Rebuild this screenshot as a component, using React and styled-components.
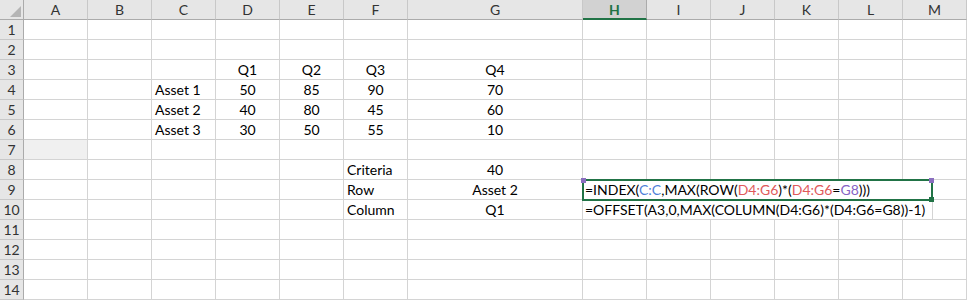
import React from 'react'
import styled, { createGlobalStyle } from 'styled-components'

const GlobalStyle = createGlobalStyle`
  html, body {
    margin: 0;
    padding: 0;
    background: #ffffff;
  }
  body {
    font-family: Lato, "Liberation Sans", sans-serif;
  }
`;

const COLS = ['A', 'B', 'C', 'D', 'E', 'F', 'G', 'H', 'I', 'J', 'K', 'L', 'M'];
const WIDTHS = { G: 175 };
const ROW_COUNT = 14;
const ACTIVE_COL = 'H';

// plain strings are centred, { text, left } sit on the left edge
const CELLS = {
  3: { D: 'Q1', E: 'Q2', F: 'Q3', G: 'Q4' },
  4: { C: { text: 'Asset 1', left: true }, D: '50', E: '85', F: '90', G: '70' },
  5: { C: { text: 'Asset 2', left: true }, D: '40', E: '80', F: '45', G: '60' },
  6: { C: { text: 'Asset 3', left: true }, D: '30', E: '50', F: '55', G: '10' },
  8: { F: { text: 'Criteria', left: true }, G: '40' },
  9: { F: { text: 'Row', left: true }, G: 'Asset 2' },
  10: { F: { text: 'Column', left: true }, G: 'Q1' },
};

const Sheet = styled.div`
  display: grid;
  grid-template-columns: 24px ${COLS.map((c) => `${WIDTHS[c] || 64}px`).join(' ')};
  grid-auto-rows: 20px;
  width: 968px;
  font-size: 14px;
  color: #000;
  overflow: hidden;
`;

const Corner = styled.div`
  position: relative;
  background: #e6e6e6;
  border-right: 1px solid #ababab;
  border-bottom: 1px solid #ababab;
  box-sizing: border-box;
  &::after {
    content: '';
    position: absolute;
    right: 2px;
    bottom: 2px;
    width: 0;
    height: 0;
    border-left: 11px solid transparent;
    border-bottom: 11px solid #b5b5b5;
  }
`;

const ColHeader = styled.div`
  box-sizing: border-box;
  background: ${(p) => (p.$active ? '#d2d2d2' : '#e6e6e6')};
  border-right: 1px solid ${(p) => (p.$active ? '#ababab' : '#c8c8c8')};
  border-bottom: ${(p) => (p.$active ? '2px solid #217346' : '1px solid #ababab')};
  color: ${(p) => (p.$active ? '#217346' : '#333')};
  font-weight: ${(p) => (p.$active ? 700 : 400)};
  text-align: center;
  line-height: 19px;
  font-size: 14px;
`;

const RowHeader = styled.div`
  box-sizing: border-box;
  background: #e6e6e6;
  border-right: 1px solid #ababab;
  border-bottom: 1px solid #c8c8c8;
  color: #333;
  text-align: center;
  line-height: 19px;
  font-size: 14px;
`;

const Cell = styled.div`
  position: relative;
  box-sizing: border-box;
  border-right: 1px solid #d4d4d4;
  border-bottom: 1px solid #d4d4d4;
  background: ${(p) => p.$fill || '#fff'};
  line-height: 19px;
  padding: 0 3px;
  text-align: ${(p) => (p.$left ? 'left' : 'center')};
  white-space: nowrap;
`;

const EditBox = styled.div`
  position: absolute;
  left: -1px;
  top: -1px;
  width: 351px;
  height: 22px;
  box-sizing: border-box;
  border: 2px solid #217346;
  background: #fff;
  padding: 0 1px;
  line-height: 18px;
  z-index: 2;
  white-space: nowrap;
`;

const Handle = styled.span`
  position: absolute;
  width: 5px;
  height: 5px;
  background: ${(p) => p.$color};
  ${(p) => (p.$top ? 'top: -3px;' : 'bottom: -3px;')}
  ${(p) => (p.$left ? 'left: -3px;' : 'right: -3px;')}
`;

const Overflow = styled.div`
  position: absolute;
  left: 0;
  top: 0;
  width: 350px;
  height: 19px;
  box-sizing: border-box;
  background: #fff;
  border-right: 1px solid #d4d4d4;
  padding: 0 2px;
  line-height: 19px;
  z-index: 1;
  white-space: nowrap;
`;

const Ref = styled.span`
  color: ${(p) => p.$color};
`;

const BLUE = '#4f7fd8';
const RED = '#e0595b';
const PURPLE = '#8763c4';

function IndexFormula() {
  return (
    <EditBox>
      =INDEX(<Ref $color={BLUE}>C:C</Ref>,MAX(ROW(<Ref $color={RED}>D4:G6</Ref>)*(
      <Ref $color={RED}>D4:G6</Ref>=<Ref $color={PURPLE}>G8</Ref>)))
      <Handle $top $left $color="#8a6fbf" />
      <Handle $top $color="#8a6fbf" />
      <Handle $color="#217346" />
    </EditBox>
  );
}

function renderCell(row, col) {
  const key = `${col}${row}`;
  const raw = (CELLS[row] || {})[col];
  const text = raw && typeof raw === 'object' ? raw.text : raw;
  const left = !!(raw && raw.left);
  if (row === 9 && col === 'H') {
    return (
      <Cell key={key} $left>
        <IndexFormula />
      </Cell>
    );
  }
  if (row === 10 && col === 'H') {
    return (
      <Cell key={key} $left>
        <Overflow>=OFFSET(A3,0,MAX(COLUMN(D4:G6)*(D4:G6=G8))-1)</Overflow>
      </Cell>
    );
  }
  return (
    <Cell key={key} $left={left} $fill={row === 7 && col === 'A' ? '#f0f0f0' : null}>
      {text}
    </Cell>
  );
}

export default function App() {
  const rows = Array.from({ length: ROW_COUNT }, (_, i) => i + 1);
  return (
    <>
      <GlobalStyle />
      <Sheet>
        <Corner />
        {COLS.map((c) => (
          <ColHeader key={c} $active={c === ACTIVE_COL}>
            {c}
          </ColHeader>
        ))}
        {rows.map((r) => (
          <React.Fragment key={r}>
            <RowHeader>{r}</RowHeader>
            {COLS.map((c) => renderCell(r, c))}
          </React.Fragment>
        ))}
      </Sheet>
    </>
  );
}
